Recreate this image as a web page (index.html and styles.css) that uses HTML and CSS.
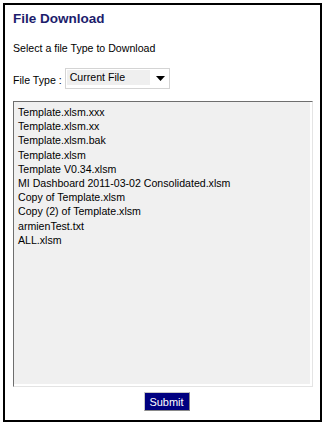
FILE: index.html
```html
<!DOCTYPE html>
<html>
<head>
<meta charset="utf-8">
<link rel="stylesheet" href="styles.css">
</head>
<body>
<div class="panel">
  <h1 class="title">File Download</h1>
  <p class="intro">Select a file Type to Download</p>
  <div class="type-row">
    <span class="type-label">File Type :</span>
    <div class="select">
      <span class="select-value">Current File</span>
      <svg class="select-arrow" width="9" height="5" viewBox="0 0 9 5"><path d="M0 0H9L4.5 5Z" fill="#000"/></svg>
    </div>
  </div>
  <div class="listbox">
    <div class="listbox-inner">
      <div class="item">Template.xlsm.xxx</div>
      <div class="item">Template.xlsm.xx</div>
      <div class="item">Template.xlsm.bak</div>
      <div class="item">Template.xlsm</div>
      <div class="item">Template V0.34.xlsm</div>
      <div class="item">MI Dashboard 2011-03-02 Consolidated.xlsm</div>
      <div class="item">Copy of Template.xlsm</div>
      <div class="item">Copy (2) of Template.xlsm</div>
      <div class="item">armienTest.txt</div>
      <div class="item">ALL.xlsm</div>
    </div>
  </div>
  <div class="actions">
    <button class="submit" type="button">Submit</button>
  </div>
</div>
</body>
</html>
```

FILE: styles.css
```css
html, body {
  margin: 0;
  padding: 0;
  background: #fff;
}
body {
  font-family: "Liberation Sans", Arial, sans-serif;
  font-size: 10.6px;
  color: #000;
}
.panel {
  margin: 3px;
  width: 315px;
  height: 415px;
  border: 2px solid #000;
  box-sizing: content-box;
  display: flex;
  flex-direction: column;
  padding: 0;
}
.title {
  margin: 6px 0 0 8px;
  font-size: 13.5px;
  font-weight: bold;
  color: #1c1c6c;
  line-height: 16px;
}
.intro {
  margin: 14px 0 0 8px;
  line-height: 14px;
}
.type-row {
  display: flex;
  align-items: center;
  margin: 13px 0 0 8px;
  gap: 3px;
}
.type-label {
  line-height: 14px;
  padding-top: 2px;
}
.select {
  width: 101px;
  height: 19px;
  border: 1px solid #d4d4d4;
  background: #fff;
  display: flex;
  align-items: center;
  padding: 0 1px;
  box-sizing: content-box;
}
.select-value {
  background: #efefef;
  width: 80px;
  height: 15px;
  line-height: 14px;
  padding-left: 3px;
  margin-top: -3px;
}
.select-arrow {
  margin-left: 6px;
}
.listbox {
  margin: 12px 0 0 8px;
  width: 300px;
  height: 286px;
  box-sizing: border-box;
  border-top: 1px solid #6e6e6e;
  border-left: 1px solid #6e6e6e;
  border-right: 1px solid #e4e4e4;
  border-bottom: 1px solid #e4e4e4;
}
.listbox-inner {
  height: 100%;
  box-sizing: border-box;
  background: #f0f0f0;
  border-right: 2px solid #fff;
  border-bottom: 2px solid #fff;
  padding: 3px 0 0 4px;
}
.item {
  line-height: 14.2px;
  white-space: nowrap;
}
.actions {
  display: flex;
  justify-content: center;
  margin-top: 5px;
  padding-left: 8px;
}
.submit {
  font-family: "Liberation Sans", Arial, sans-serif;
  font-size: 11px;
  color: #fff;
  background: #000080;
  border: 1px solid;
  border-color: #c8c8c8 #8a8a8a #8a8a8a #c8c8c8;
  width: 46px;
  height: 19px;
  padding: 0;
  margin: 0;
}
```
